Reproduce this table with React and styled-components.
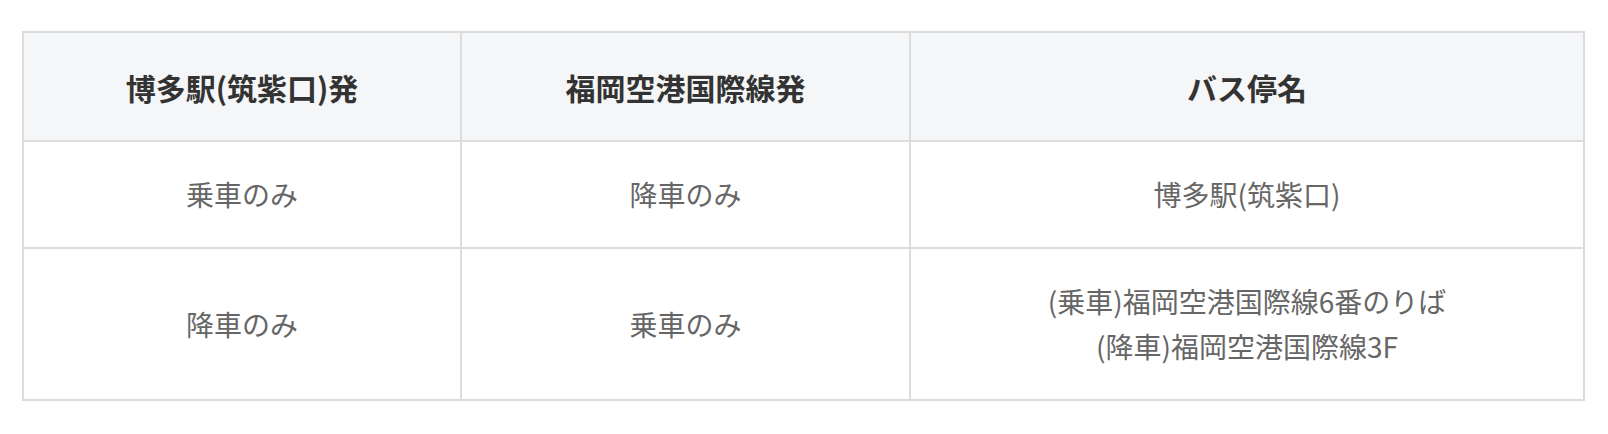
import React from "react";
import styled, { createGlobalStyle } from "styled-components";

const Global = createGlobalStyle`
  html, body { margin: 0; padding: 0; background: #fff; }
  body { font-family: "Noto Sans CJK JP", "Noto Sans", sans-serif; }
`;

const Page = styled.div`
  padding: 31px 0 0 22px;
`;

const Table = styled.table`
  width: 1561px;
  border-collapse: collapse;
  table-layout: fixed;
  border: 2px solid #dcdcdc;
`;

const Col = styled.col`
  width: ${(p) => p.$w}px;
`;

const Th = styled.th`
  background: #f5f6f7;
  color: #333;
  font-size: 30px;
  font-weight: 700;
  line-height: 48px;
  padding: 30px 10px 29px;
  border: 2px solid #dcdcdc;
  text-align: center;
`;

const Td = styled.td`
  color: #666;
  font-size: 28px;
  font-weight: 400;
  line-height: 45px;
  padding: 30px 10px;
  border: 2px solid #dcdcdc;
  text-align: center;
`;

const rows = [
  ["乗車のみ", "降車のみ", ["博多駅(筑紫口)"]],
  ["降車のみ", "乗車のみ", ["(乗車)福岡空港国際線6番のりば", "(降車)福岡空港国際線3F"]],
];

export default function App() {
  return (
    <>
      <Global />
      <Page>
        <Table>
          <colgroup>
            <Col $w={438} />
            <Col $w={449} />
            <Col $w={674} />
          </colgroup>
          <thead>
            <tr>
              <Th>博多駅(筑紫口)発</Th>
              <Th>福岡空港国際線発</Th>
              <Th>バス停名</Th>
            </tr>
          </thead>
          <tbody>
            {rows.map((r, i) => (
              <tr key={i}>
                <Td>{r[0]}</Td>
                <Td>{r[1]}</Td>
                <Td>
                  {r[2].map((l, j) => (
                    <React.Fragment key={j}>
                      {j > 0 && <br />}
                      {l}
                    </React.Fragment>
                  ))}
                </Td>
              </tr>
            ))}
          </tbody>
        </Table>
      </Page>
    </>
  );
}
